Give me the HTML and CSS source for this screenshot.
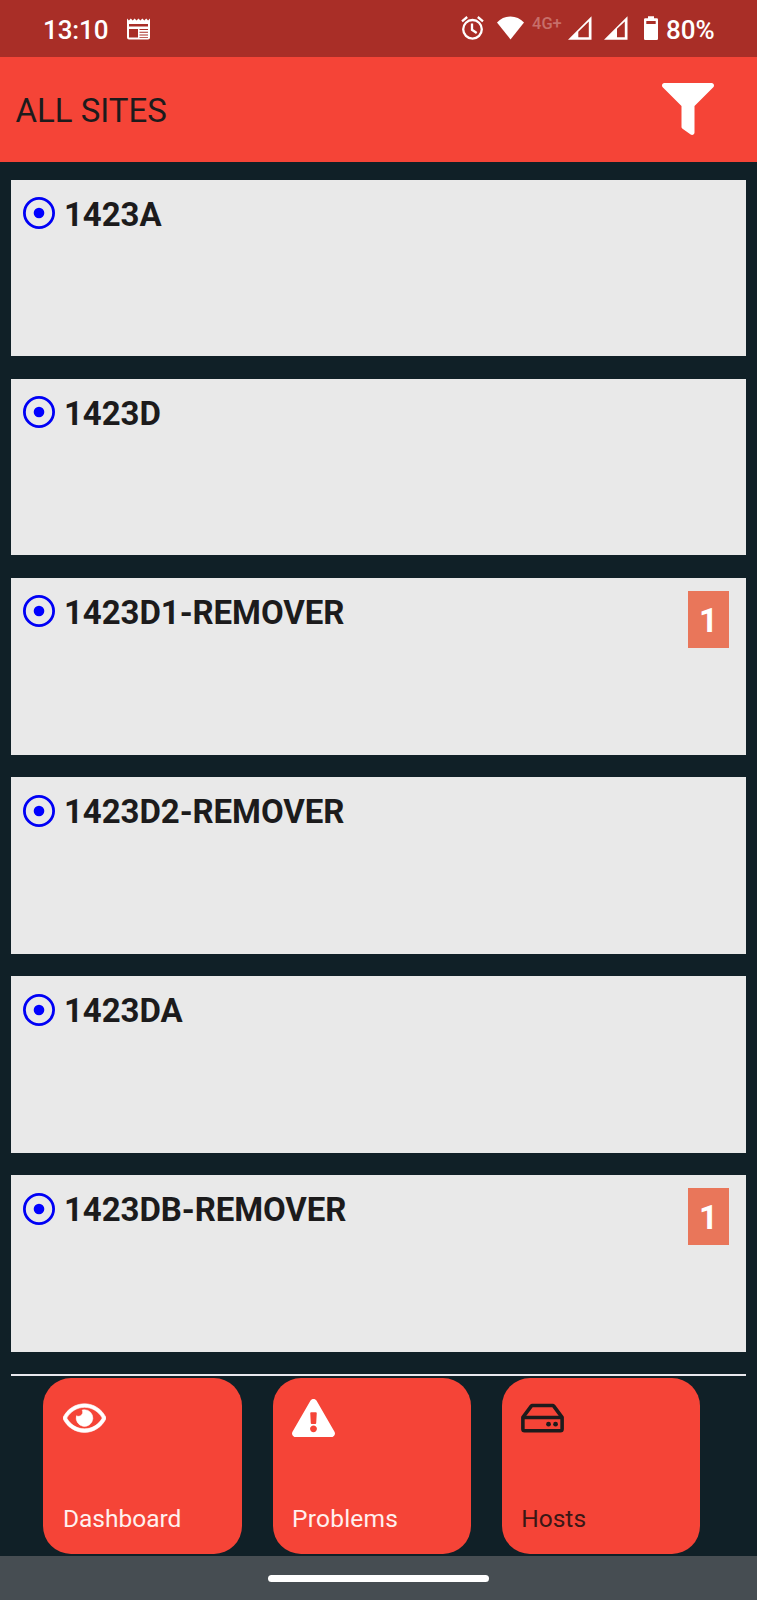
FILE: index.html
```html
<!DOCTYPE html>
<html lang="en">
<head>
<meta charset="utf-8">
<title>All sites</title>
<link rel="stylesheet" href="styles.css">
</head>
<body>
<div class="status">
  <span class="time">13:10</span>
  <svg class="news" width="23" height="22" viewBox="0 0 23 22"><path fill="#fff" fill-rule="evenodd" d="M0 0.5l1.9 1.9L3.8.5l1.9 1.9L7.6.5l1.9 1.9L11.5.5l1.9 1.9L15.4.5l1.9 1.9L19.2.5l1.9 1.9L23 .5V19.500a2 2 0 0 1-2 2H2a2 2 0 0 1-2-2zM2 6v2.500h19V6zM2 11v8.500h9V11zM12.500 11v1H21V11zm0 2.800v1H21v-1zm0 2.800v1H21v-1zm0 2.400v.8H21V19z"/></svg>
  <span class="spacer"></span>
  <svg class="alarm" width="23" height="24" viewBox="0 0 23 24" fill="none" stroke="#fff"><circle cx="11.500" cy="13.300" r="9.300" stroke-width="2.300"/><path stroke-width="2.300" d="M11 7.500v6.300l4.700 3.200M1 5.300L6.200 1M22 5.300L16.800 1"/></svg>
  <svg class="wifi" width="27" height="24" viewBox="0 0 27 24"><path fill="#fff" d="M13.500 23.500L0 6.500Q5.500.5 13.500.5T27 6.500z"/></svg>
  <span class="net">4G+</span>
  <svg class="signal" width="24" height="24" viewBox="0 0 24 24"><path fill="#fff" fill-rule="evenodd" d="M0 23.800L23.500.3v23.500zM10.300 15.700v5.500h10.500V5.500z"/></svg>
  <svg class="signal two" width="24" height="24" viewBox="0 0 24 24"><path fill="#fff" fill-rule="evenodd" d="M0 23.800L23.500.3v23.500zM13 12.800v8.400h7.800V5.500z"/></svg>
  <svg class="battery" width="14" height="24" viewBox="0 0 14 24"><path fill="#fff" fill-rule="evenodd" d="M4 .3h6v2h2.700A1.300 1.300 0 0 1 14 3.600v19.100a1.300 1.300 0 0 1-1.300 1.300H1.300A1.300 1.300 0 0 1 0 22.700V3.600a1.300 1.300 0 0 1 1.300-1.300H4zM2.300 5v3h9.400V5z"/></svg>
  <span class="percent">80%</span>
</div>
<header class="header">
  <h1 class="title">ALL SITES</h1>
  <svg class="filter" width="52" height="52" viewBox="0 0 512 512"><path fill="#fff" d="M487.976 0H24.028C2.710 0-8.047 25.866 7.058 40.971L192 225.941V432c0 7.831 3.821 15.170 10.237 19.662l80 55.980C298.020 518.690 320 507.493 320 487.980V225.941l184.947-184.970C520.021 25.896 509.338 0 487.976 0z"/></svg>
</header>
<main class="list">
  <section class="card"><svg class="ring" viewBox="0 0 32 32"><circle class="ring-line" cx="16" cy="16" r="14.600"/><circle class="ring-dot" cx="16" cy="16" r="5.300"/></svg><h2 class="name">1423A</h2></section>
  <section class="card"><svg class="ring" viewBox="0 0 32 32"><circle class="ring-line" cx="16" cy="16" r="14.600"/><circle class="ring-dot" cx="16" cy="16" r="5.300"/></svg><h2 class="name">1423D</h2></section>
  <section class="card"><svg class="ring" viewBox="0 0 32 32"><circle class="ring-line" cx="16" cy="16" r="14.600"/><circle class="ring-dot" cx="16" cy="16" r="5.300"/></svg><h2 class="name">1423D1-REMOVER</h2><span class="badge">1</span></section>
  <section class="card"><svg class="ring" viewBox="0 0 32 32"><circle class="ring-line" cx="16" cy="16" r="14.600"/><circle class="ring-dot" cx="16" cy="16" r="5.300"/></svg><h2 class="name">1423D2-REMOVER</h2></section>
  <section class="card"><svg class="ring" viewBox="0 0 32 32"><circle class="ring-line" cx="16" cy="16" r="14.600"/><circle class="ring-dot" cx="16" cy="16" r="5.300"/></svg><h2 class="name">1423DA</h2></section>
  <section class="card"><svg class="ring" viewBox="0 0 32 32"><circle class="ring-line" cx="16" cy="16" r="14.600"/><circle class="ring-dot" cx="16" cy="16" r="5.300"/></svg><h2 class="name">1423DB-REMOVER</h2><span class="badge">1</span></section>
  <div class="next-edge"></div>
</main>
<nav class="tabs">
  <div class="tab">
    <svg class="tab-icon" viewBox="0 0 576 512"><path fill="#fff" stroke="#fff" stroke-width="8" d="M288 144a110.940 110.940 0 0 0-31.240 5 55.400 55.400 0 0 1 7.240 27 56 56 0 0 1-56 56 55.400 55.400 0 0 1-27-7.240A111.710 111.710 0 1 0 288 144zm284.520 97.400C518.290 135.590 410.930 64 288 64S57.680 135.640 3.480 241.410a32.350 32.350 0 0 0 0 29.190C57.710 376.410 165.070 448 288 448s230.320-71.640 284.520-177.410a32.350 32.350 0 0 0 0-29.190zM288 400c-98.650 0-189.090-55-237.930-144C98.910 167 189.340 112 288 112s189.090 55 237.930 144C477.100 345 386.660 400 288 400z"/></svg>
    <span class="tab-label">Dashboard</span>
  </div>
  <div class="tab">
    <svg class="tab-icon" viewBox="0 0 576 512"><path fill="#fff" d="M569.517 440.013C587.975 472.007 564.806 512 527.940 512H48.054c-36.937 0-59.999-40.055-41.577-71.987L246.423 23.985c18.467-32.009 64.720-31.951 83.154 0l239.940 416.028zM288 354c-25.405 0-46 20.595-46 46s20.595 46 46 46 46-20.595 46-46-20.595-46-46-46zm-43.673-165.346l7.418 136c.347 6.364 5.609 11.346 11.982 11.346h48.546c6.373 0 11.635-4.982 11.982-11.346l7.418-136c.375-6.874-5.098-12.654-11.982-12.654h-63.383c-6.884 0-12.356 5.780-11.981 12.654z"/></svg>
    <span class="tab-label problems">Problems</span>
  </div>
  <div class="tab current">
    <svg class="tab-icon" viewBox="0 0 576 512"><g fill="none" stroke="#1c1b1c" stroke-width="48" stroke-linejoin="round"><path d="M25 247L137 96q6-9 16-9h270q10 0 16 9L551 247v155q0 23-23 23H48q-23 0-23-23z"/><path d="M25 247h526"/></g><circle cx="369" cy="337" r="32" fill="#1c1b1c"/><circle cx="463" cy="337" r="32" fill="#1c1b1c"/></svg>
    <span class="tab-label">Hosts</span>
  </div>
</nav>
<footer class="system"><div class="pill"></div></footer>
</body>
</html>
```
FILE: styles.css
```css
* { box-sizing: border-box; }
body {
  margin: 0;
  width: 757px;
  height: 1600px;
  overflow: hidden;
  display: flex;
  flex-direction: column;
  background: #102027;
  color: #1c1b1c;
  font-family: Roboto, "Liberation Sans", sans-serif;
}
svg { display: block; flex: none; }
.status {
  height: 57px;
  flex: none;
  display: flex;
  align-items: flex-start;
  padding: 16px 0 0 43px;
  background: #a92e27;
  color: #fff;
}
.time, .percent { font-size: 26px; line-height: 28px; font-weight: 500; }
.time { width: 84px; letter-spacing: -0.1px; }
.news { margin-top: 2px; }
.spacer { flex: 1; }
.wifi { margin-left: 13px; }
.net {
  width: 35px;
  margin-left: 8px;
  color: #c76f6a;
  font-size: 16.5px;
  line-height: 15px;
  font-weight: 500;
}
.signal { margin-left: 1px; }
.two { margin-left: 12px; }
.battery { margin-left: 16px; }
.percent { width: 91px; margin-left: 8px; }
.header {
  height: 105px;
  flex: none;
  display: flex;
  align-items: center;
  justify-content: space-between;
  padding: 0 43.5px 0 15.5px;
  background: #f54437;
}
.title {
  margin: 0;
  padding-top: 2px;
  font-size: 33px;
  line-height: 38px;
  font-weight: 400;
}
.filter { margin-bottom: 1px; }
.list {
  flex: none;
  height: 1216px;
  padding: 17.5px 11px 0;
  display: flex;
  flex-direction: column;
  gap: 22.4px;
  overflow: hidden;
}
.card {
  height: 176.8px;
  flex: none;
  display: flex;
  align-items: flex-start;
  padding: 13px 17px 0 12px;
  background: #e9e9e9;
}
.ring { width: 32px; height: 32px; margin-top: 4.6px; }
.ring-line { fill: none; stroke: #0000f5; stroke-width: 2.8; }
.ring-dot { fill: #0000ff; }
.name {
  flex: 1;
  margin: 2px 0 0 9px;
  font-size: 33px;
  line-height: 40px;
  font-weight: 700;
  letter-spacing: -0.08px;
}
.badge {
  width: 41px;
  height: 57px;
  background: #e9765a;
  color: #fff;
  font-size: 33px;
  line-height: 59px;
  font-weight: 700;
  text-align: center;
}
.next-edge { height: 2px; margin-top: -0.5px; flex: none; background: #e9e9ee; }
.tabs {
  height: 178px;
  flex: none;
  display: grid;
  grid-template-columns: repeat(3, 198.4px);
  gap: 30.8px;
  padding-left: 43.4px;
}
.tab {
  height: 175.7px;
  display: flex;
  flex-direction: column;
  justify-content: space-between;
  padding: 21px 19.5px 20px;
  border-radius: 28px;
  background: #f54437;
  color: #fff0ee;
}
.tab-icon { width: 43px; height: 38.2px; }
.tab-label { font-size: 24.5px; line-height: 30px; }
.problems { letter-spacing: 0.2px; }
.current { color: #3a1715; }
.system {
  flex: 1;
  display: flex;
  justify-content: center;
  align-items: flex-start;
  padding-top: 18.5px;
  background: #464d52;
}
.pill { width: 221px; height: 7.5px; border-radius: 4px; background: #fff; }
```
